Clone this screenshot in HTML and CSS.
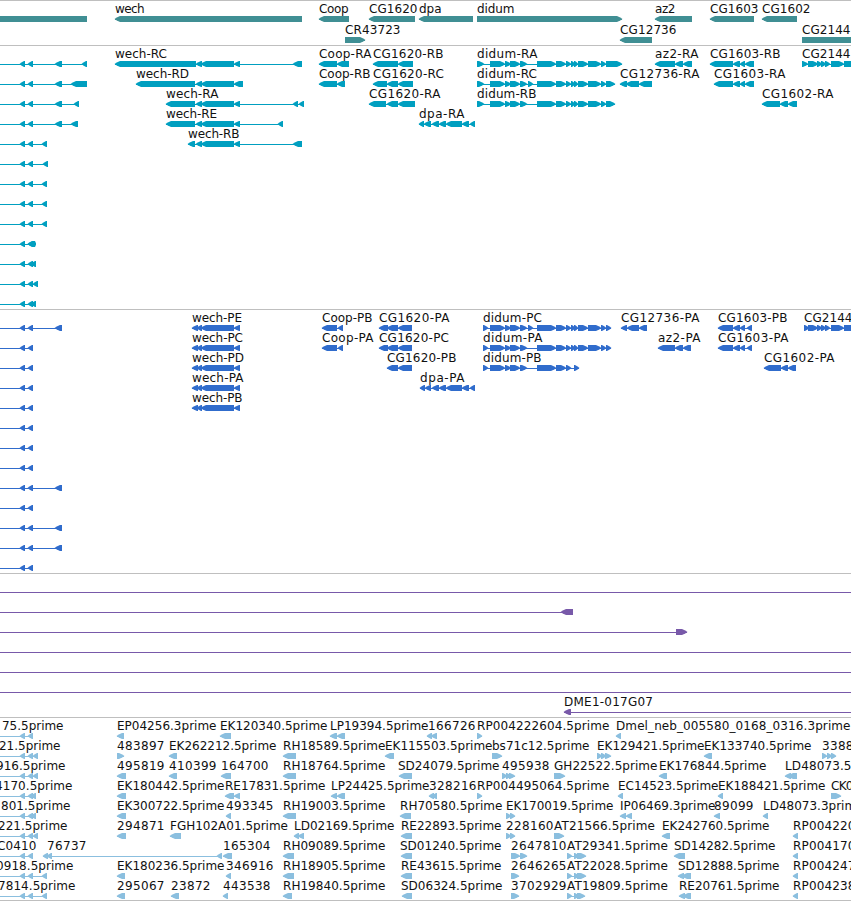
FILE: index.html
```
<!DOCTYPE html>
<html lang="en">
<head>
    <meta charset="UTF-8">
    <title>Genome browser</title>
    <link rel="stylesheet" href="styles.css">
</head>
<body>
    <div class="browser">
        <div class="track genes"><svg id="genes"></svg></div>
        <div class="track transcripts"><svg id="transcripts"></svg></div>
        <div class="track proteins"><svg id="proteins"></svg></div>
        <div class="track clones"><svg id="clones"></svg></div>
        <div class="track ests"><svg id="ests"></svg></div>
    </div>
    <script src="tracks.js"></script>
</body>
</html>
```
FILE: styles.css
```
* {
    margin: 0px;
    padding: 0px;
}
body {
    background: #fff;
    overflow: hidden;
}
.browser {
    width: 851px;
    border-bottom: 1px solid #bfbfbf;
}
.track {
    height: 263px;
    border-top: 1px solid #bfbfbf;
    overflow: hidden;
}
.track svg {
    display: block;
    width: 851px;
    height: 100%;
}
.track text {
    font-family: "DejaVu Sans", sans-serif;
    font-size: 12px;
    fill: #111;
}
.genes {
    height: 44px;
    fill: #408f94;
}
.transcripts {
    fill: #009fc0;
}
.proteins {
    fill: #306ccc;
}
.clones {
    height: 143px;
    fill: #7859a9;
}
.ests {
    height: 182px;
    fill: #8bbfdf;
}
```
FILE: tracks.js
```
var NS = 'http://www.w3.org/2000/svg';
var END = 851;

// label widths in whole pixels, digits and everything unlisted are 8
var widths = {
    '.': 4, '-': 6.5, '_': 6, A: 8.5, B: 7.5, D: 9, E: 7, F: 6, G: 9, H: 9, I: 3, K: 7, L: 6,
    M: 10, P: 7, S: 7, T: 7, a: 7, c: 6, e: 7, i: 3, l: 3, m: 11, o: 7, r: 5, s: 6, w: 9, z: 6
};

function add(svg, tag, attrs) {
    var el = document.createElementNS(NS, tag);
    for (var key in attrs) {
        el.setAttribute(key, attrs[key]);
    }
    svg.appendChild(el);
    return el;
}

function labelWidth(name) {
    var w = 0;
    for (var i = 0; i < name.length; i++) {
        w += widths[name[i]] || 8;
    }
    return w;
}

// one part of a feature, 6px high with a pointed end
function part(svg, dir, a, b, y) {
    var tip = Math.max(1, Math.min(5, b - a - 1));
    var head = dir == '<' ? a : b;
    var tail = dir == '<' ? b : a;
    var d = dir == '<' ? 1 : -1;
    var p = [
        [head - d * 0.5, y + 3],
        [head + d * tip * 0.35, y + 1.5],
        [head + d * tip, y],
        [tail, y],
        [tail, y + 6],
        [head + d * tip, y + 6],
        [head + d * tip * 0.35, y + 4.5]
    ];
    add(svg, 'polygon', {points: p.join(' ')});
}

// feature: [row, direction, name, [start, end, start, end...], line start, line end, label x]
function draw(id, pitch, features) {
    var svg = document.getElementById(id);
    features.forEach(function(f) {
        var y = 15 + f[0] * pitch;
        var parts = f[3];
        var from = f[4] === undefined ? parts[0] : f[4];
        var to = f[5] === undefined ? parts[parts.length - 1] : f[5];
        add(svg, 'rect', {x: from, y: y + 3, width: to - from, height: 1});
        for (var i = 0; i < parts.length; i += 2) {
            part(svg, f[1], parts[i], parts[i + 1], y);
        }
        if (f[2]) {
            var text = add(svg, 'text', {
                x: f[6] === undefined ? parts[0] : f[6],
                y: y - 3,
                textLength: labelWidth(f[2]) - 0.5
            });
            text.textContent = f[2];
        }
    });
}

draw('genes', 21, [
    [0, '<', '', [-10, 87]],
    [0, '<', 'wech', [115, 302]],
    [0, '<', 'Coop', [319, 349]],
    [0, '<', 'CG1620', [369, 415]],
    [0, '<', 'dpa', [419, 473]],
    [0, '>', 'didum', [477, 622]],
    [0, '<', 'az2', [655, 692]],
    [0, '<', 'CG1603', [710, 754]],
    [0, '<', 'CG1602', [762, 797]],
    [1, '>', 'CR43723', [345, 365]],
    [1, '<', 'CG12736', [620, 652]],
    [1, '>', 'CG2144', [802, 870]]
]);

var didum = [490, 505, 505, 511, 510, 520, 520, 527];
var didumMid = [537, 556, 556, 566, 566, 571];
var didumEnd = [571, 575, 574, 578, 578, 588, 588, 601, 601, 606];
var cg2144 = [808, 818, 817, 822, 821, 826, 825, 830, 831, 844, 844, 870];

var transcripts = [
    [0, '<', 'wech-RC', [115, 196, 196, 202, 201, 234, 234, 240, 293, 302]],
    [1, '<', 'wech-RD', [136, 195, 196, 202, 201, 234, 234, 243]],
    [2, '<', 'wech-RA', [166, 195, 196, 202, 201, 234, 234, 240, 293, 298, 299, 304]],
    [3, '<', 'wech-RE', [166, 195, 196, 202, 201, 234, 234, 240, 278, 283]],
    [4, '<', 'wech-RB', [188, 195, 196, 202, 201, 234, 234, 240, 293, 302]],
    [0, '<', 'Coop-RA', [319, 337, 337, 349]],
    [1, '<', 'Coop-RB', [319, 337, 337, 345]],
    [0, '<', 'CG1620-RB', [373, 398, 398, 413]],
    [1, '<', 'CG1620-RC', [373, 387, 387, 398, 398, 413]],
    [2, '<', 'CG1620-RA', [369, 386, 387, 398, 398, 415]],
    [3, '<', 'dpa-RA', [419, 424, 424, 431, 432, 439, 439, 446, 446, 462, 462, 469, 470, 475]],
    [0, '>', 'didum-RA', [477, 484].concat(didum, didumMid, didumEnd, [606, 622])],
    [1, '>', 'didum-RC', [477, 484].concat(didum, [528, 533], didumMid, didumEnd, [606, 615])],
    [2, '>', 'didum-RB', [477, 484].concat(didum, didumMid, didumEnd, [606, 615])],
    [0, '<', 'az2-RA', [655, 675, 675, 683, 683, 692]],
    [1, '<', 'CG12736-RA', [620, 627, 626, 639, 639, 652]],
    [0, '<', 'CG1603-RB', [710, 733, 733, 740, 740, 745, 745, 754]],
    [1, '<', 'CG1603-RA', [714, 733, 733, 740, 740, 745, 745, 754]],
    [2, '<', 'CG1602-RA', [762, 780, 780, 788, 788, 797]],
    [0, '>', 'CG2144', [802, 808].concat(cg2144)]
];
// features that start left of the window
[
    [55, 61, 57, 62, 82, 87], [55, 61, 57, 62, 71, 87], [55, 61, 57, 62, 74, 79],
    [55, 61, 57, 62, 71, 78], [42, 47], [43, 48], [42, 47], [42, 47], [42, 47],
    [28, 35, 35, 36], [31, 36], [33, 38], [31, 36]
].forEach(function(parts, row) {
    transcripts.push([row, '<', '', [20, 25, 28, 33].concat(parts), 0]);
});
draw('transcripts', 20, transcripts);

var proteins = [
    [0, '<', 'Coop-PB', [322, 337, 338, 343]],
    [1, '<', 'Coop-PA', [322, 337, 338, 343]],
    [0, '<', 'CG1620-PA', [379, 388, 387, 398, 398, 412]],
    [1, '<', 'CG1620-PC', [379, 388, 387, 398, 398, 412]],
    [2, '<', 'CG1620-PB', [387, 398, 398, 412]],
    [3, '<', 'dpa-PA', [420, 425, 425, 431, 432, 439, 439, 446, 446, 462, 462, 469, 470, 475]],
    [0, '>', 'didum-PC', [483, 488].concat(didum, [528, 533], didumMid, didumEnd, [606, 611])],
    [1, '>', 'didum-PA', [483, 488].concat(didum, didumMid, didumEnd, [606, 611])],
    [2, '>', 'didum-PB', [483, 488].concat(didum, didumMid, [574, 579])],
    [0, '<', 'CG12736-PA', [621, 627, 627, 639, 639, 647]],
    [1, '<', 'az2-PA', [658, 675, 675, 683, 683, 691]],
    [0, '<', 'CG1603-PB', [718, 733, 733, 740, 740, 745, 747, 752]],
    [1, '<', 'CG1603-PA', [718, 733, 733, 740, 740, 745, 747, 752]],
    [2, '<', 'CG1602-PA', [764, 781, 781, 788, 788, 796]],
    [0, '>', 'CG2144', [804, 809].concat(cg2144)]
];
['wech-PE', 'wech-PC', 'wech-PD', 'wech-PA', 'wech-PB'].forEach(function(name, row) {
    proteins.push([row, '<', name, [192, 198, 197, 202, 201, 234, 234, 240]]);
});
for (var row = 0; row < 13; row++) {
    var extra = [0, 8, 10, 11].indexOf(row) > -1 ? [55, 61, 57, 62] : [];
    proteins.push([row, '<', '', [20, 25, 28, 33].concat(extra), 0]);
}
draw('proteins', 20, proteins);

draw('clones', 20, [
    [0, '<', '', [], 0, END],
    [1, '<', '', [561, 573], 0],
    [2, '>', '', [676, 687], 0],
    [3, '<', '', [], 0, END],
    [4, '<', '', [], 0, END],
    [5, '<', '', [], 0, END],
    [6, '<', 'DME1-017G07', [564, 571], 564, END]
]);

draw('ests', 20, [
    [0, '<', '75.5prime', [20, 25, 28, 33], 0, 33, 2],
    [0, '<', 'EP04256.3prime', [117, 124]],
    [0, '<', 'EK120340.5prime', [220, 231]],
    [0, '<', 'LP19394.5prime', [330, 337, 337, 345]],
    [0, '<', '166726', [427, 432, 431, 437], 427, 437, 428],
    [0, '>', 'RP004222604.5prime', [477, 482]],
    [0, '<', 'Dmel_neb_005580_0168_0316.3prime', [616, 621]],

    [1, '<', '21.5prime', [20, 25, 28, 33, 33, 38], 0, 38, -1],
    [1, '>', '483897', [117, 124]],
    [1, '<', 'EK262212.5prime', [169, 177]],
    [1, '<', 'RH18589.5prime', [283, 296]],
    [1, '<', 'EK115503.5prime', [385, 394]],
    [1, '>', 'bs71c12.5prime', [492, 502]],
    [1, '>', 'EK129421.5prime', [597, 602, 601, 606, 605, 611]],
    [1, '<', 'EK133740.5prime', [704, 712]],
    [1, '>', '3388', [822, 827, 827, 832, 831, 836]],

    [2, '<', '916.5prime', [20, 25, 28, 33, 33, 38], 0, 38, -4],
    [2, '<', '495819', [117, 126]],
    [2, '<', '410399', [169, 177]],
    [2, '<', '164700', [221, 231]],
    [2, '<', 'RH18764.5prime', [283, 296]],
    [2, '<', 'SD24079.5prime', [399, 412], 399, 412, 398],
    [2, '>', '495938', [502, 507, 506, 511, 509, 515]],
    [2, '>', 'GH22522.5prime', [554, 565]],
    [2, '<', 'EK176844.5prime', [659, 667]],
    [2, '<', 'LD48073.5', [785, 791, 788, 797]],

    [3, '<', '4170.5prime', [20, 25, 28, 33, 31, 36], 0, 36, -5],
    [3, '<', 'EK180442.5prime', [117, 126]],
    [3, '<', 'RE17831.5prime', [225, 234, 234, 240]],
    [3, '<', 'LP24425.5prime', [331, 337, 337, 345]],
    [3, '<', '328216', [429, 434, 432, 437]],
    [3, '>', 'RP004495064.5prime', [477, 482]],
    [3, '<', 'EC14523.5prime', [618, 623]],
    [3, '<', 'EK188421.5prime', [718, 723]],
    [3, '>', 'CK0', [831, 841]],

    [4, '<', '801.5prime', [20, 25, 28, 33, 31, 36], 0, 36, 1],
    [4, '<', 'EK300722.5prime', [117, 126]],
    [4, '<', '493345', [226, 231]],
    [4, '<', 'RH19003.5prime', [283, 296]],
    [4, '<', 'RH70580.5prime', [400, 411]],
    [4, '>', 'EK170019.5prime', [506, 511, 510, 515]],
    [4, '<', 'IP06469.3prime', [620, 626, 626, 632]],
    [4, '<', '89099', [714, 720]],
    [4, '<', 'LD48073.3prime', [763, 768]],

    [5, '<', '221.5prime', [20, 25, 28, 33, 33, 38], 0, 38, -2],
    [5, '<', '294871', [117, 126]],
    [5, '<', 'FGH102A01.5prime', [170, 181]],
    [5, '<', 'LD02169.5prime', [294, 299, 298, 304]],
    [5, '<', 'RE22893.5prime', [401, 412]],
    [5, '>', '228160', [506, 511, 510, 515]],
    [5, '>', 'AT21566.5prime', [554, 564]],
    [5, '<', 'EK242760.5prime', [662, 670]],
    [5, '<', 'RP004220', [793, 798]],

    [6, '<', 'C0410', [20, 25, 28, 33], 0, 33, -3],
    [6, '<', '76737', [43, 48, 47, 52, 217, 222], 43, 222, 47],
    [6, '<', '165304', [223, 232]],
    [6, '<', 'RH09089.5prime', [283, 294]],
    [6, '<', 'SD01240.5prime', [401, 412], 401, 412, 400],
    [6, '>', '2647810', [511, 520, 520, 527]],
    [6, '>', 'AT29341.5prime', [567, 572, 574, 579, 577, 586]],
    [6, '<', 'SD14282.5prime', [674, 685]],
    [6, '<', 'RP004170', [793, 798]],

    [7, '<', '0918.5prime', [20, 25, 28, 33, 42, 47], 0, 47, -4],
    [7, '<', 'EK180236.5prime', [117, 125]],
    [7, '<', '346916', [226, 231]],
    [7, '<', 'RH18905.5prime', [283, 294]],
    [7, '<', 'RE43615.5prime', [401, 412]],
    [7, '>', '2646265', [511, 519]],
    [7, '>', 'AT22028.5prime', [567, 572, 574, 579, 577, 586]],
    [7, '<', 'SD12888.5prime', [678, 684, 682, 691]],
    [7, '<', 'RP004247', [793, 798]],

    [8, '<', '7814.5prime', [20, 25, 28, 33, 42, 47], 0, 47, -2],
    [8, '<', '295067', [117, 125]],
    [8, '<', '23872', [171, 179]],
    [8, '<', '443538', [223, 228]],
    [8, '<', 'RH19840.5prime', [283, 292]],
    [8, '<', 'SD06324.5prime', [402, 412], 402, 412, 401],
    [8, '>', '3702929', [511, 519]],
    [8, '>', 'AT19809.5prime', [567, 572, 574, 579, 577, 585]],
    [8, '<', 'RE20761.5prime', [679, 685, 683, 691]],
    [8, '<', 'RP004238', [793, 798]]
]);
```
